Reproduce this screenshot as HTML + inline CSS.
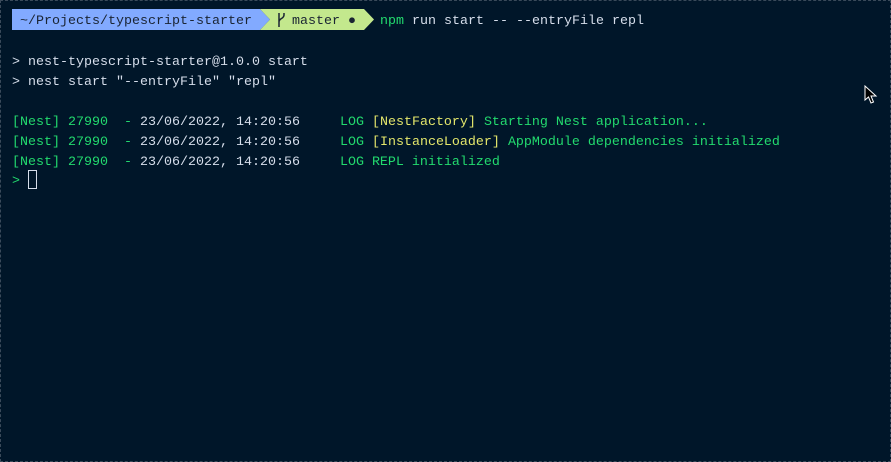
<!DOCTYPE html><html><head><style>
body{margin:0;width:891px;height:462px;background:#001629;overflow:hidden;position:relative;font-family:"Liberation Mono","DejaVu Sans Mono",monospace;font-size:13.33px;color:#d6deeb}
.frame{position:absolute;left:0;top:0;width:889px;height:460px;border:1px dashed #3a4a5a}
.l{position:absolute;left:12px;white-space:pre;line-height:20px;height:20px}
.g{color:#22da6e}.y{color:#e3e66b}.w{color:#d6deeb}
</style></head><body>
<div class="frame"></div>
<svg style="position:absolute;left:0;top:0" width="400" height="40">
<polygon points="12,9 260,9 270,19.5 260,30 12,30" fill="#82aaff"/>
<polygon points="260,9 364,9 374,19.5 364,30 260,30 270,19.5" fill="#c3e88d"/>
<path d="M279,13 L279,27 M279,22 C279,18 284,19 284,15 L284,13" stroke="#1a2433" stroke-width="1.5" fill="none"/>
</svg>
<div class="l" style="top:12px;left:20px;color:#1a2433">~/Projects/typescript-starter</div>
<div class="l" style="top:12px;left:292px;color:#1a2433">master ●</div>
<div class="l" style="top:12px;left:380px"><span class="g">npm</span> run start -- --entryFile repl</div>
<div class="l" style="top:53px">&gt; nest-typescript-starter@1.0.0 start</div>
<div class="l" style="top:73px">&gt; nest start "--entryFile" "repl"</div>
<div class="l" style="top:113px"><span class="g">[Nest] 27990  - </span>23/06/2022, 14:20:56 <span class="g">    LOG </span><span class="y">[NestFactory] </span><span class="g">Starting Nest application...</span></div>
<div class="l" style="top:133px"><span class="g">[Nest] 27990  - </span>23/06/2022, 14:20:56 <span class="g">    LOG </span><span class="y">[InstanceLoader] </span><span class="g">AppModule dependencies initialized</span></div>
<div class="l" style="top:153px"><span class="g">[Nest] 27990  - </span>23/06/2022, 14:20:56 <span class="g">    LOG REPL initialized</span></div>
<div class="l g" style="top:172px">&gt;</div>
<div style="position:absolute;left:28px;top:170px;width:7px;height:17px;border:1px solid #d6deeb"></div>
<svg style="position:absolute;left:864px;top:85px" width="14" height="20"><path d="M1,1 L1,15 L4.5,12 L7,18 L9.5,17 L7,11 L12,11 Z" fill="#000" stroke="#fff" stroke-width="1"/></svg>
</body></html>
